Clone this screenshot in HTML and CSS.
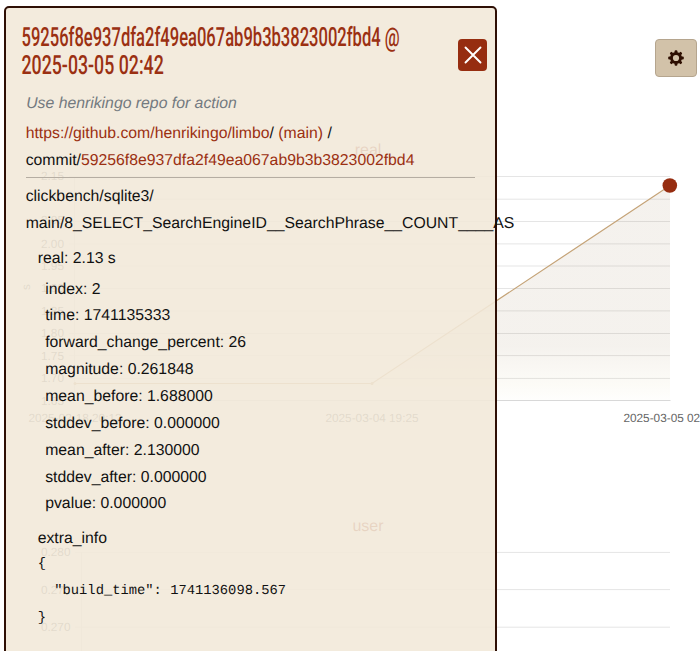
FILE: index.html
```html
<!DOCTYPE html>
<html lang="en">
<head>
<meta charset="utf-8">
<title>Benchmark results</title>
<link rel="stylesheet" href="styles.css">
</head>
<body>
<header class="toolbar">
  <button class="settings" aria-label="Settings">
    <svg width="16" height="16" viewBox="0 0 16 16"><g fill="#2e0f02"><circle cx="8" cy="8" r="6"/><g><rect x="6.6" y="0.2" width="2.8" height="15.6" rx="1"/><rect x="0.2" y="6.6" width="15.6" height="2.8" rx="1"/></g><g transform="rotate(45 8 8)"><rect x="6.6" y="0.2" width="2.8" height="15.6" rx="1"/><rect x="0.2" y="6.6" width="15.6" height="2.8" rx="1"/></g></g><circle cx="8" cy="8" r="3.1" fill="#d2c2a9"/></svg>
  </button>
</header>
<main class="charts">
  <svg class="chart" width="700" height="551" viewBox="0 100 700 551">
    <defs>
      <linearGradient id="area" x1="0" y1="185" x2="0" y2="400" gradientUnits="userSpaceOnUse">
        <stop offset="0" stop-color="#8b6b3d" stop-opacity=".09"/>
        <stop offset=".75" stop-color="#8b6b3d" stop-opacity=".09"/>
        <stop offset=".93" stop-color="#d8c68c" stop-opacity=".07"/>
        <stop offset="1" stop-color="#d8c68c" stop-opacity=".02"/>
      </linearGradient>
    </defs>
    <g class="grid">
      <path d="M69 176.5H670M69 199.2H670M69 221.5H670M69 243.9H670M69 266H670M69 288.5H670M69 310.9H670M69 333.5H670M69 355.6H670M69 378.4H670M74.500 176V400"/>
      <path d="M75 552.4H670M75 589.6H670M75 627.2H670M81.500 552V651"/>
    </g>
    <path class="axis" d="M69 400.500H670.500"/>
    <path d="M75 383.500H372L670 185.500V400H75Z" fill="url(#area)"/>
    <path class="series" d="M75 383.500H372L670 185.500"/>
    <circle class="dot" cx="75" cy="383.500" r="1.500"/>
    <circle class="dot" cx="372" cy="383.500" r="1.500"/>
    <circle class="mark" cx="669.800" cy="185.500" r="7.300"/>
    <g class="ticks end">
      <text x="64" y="180">2.15</text><text x="64" y="223.500">2.05</text><text x="64" y="247.500">2.00</text><text x="64" y="270">1.95</text><text x="64" y="292">1.90</text><text x="64" y="314.500">1.85</text><text x="64" y="337">1.80</text><text x="64" y="359.500">1.75</text><text x="64" y="382">1.70</text><text x="64" y="404.500">1.65</text>
      <text x="70.500" y="556">0.280</text><text x="70.500" y="593.500">0.275</text><text x="70.500" y="630.500">0.270</text>
    </g>
    <g class="ticks mid">
      <text x="75" y="422">2025-02-18 20:12</text><text x="372" y="422">2025-03-04 19:25</text><text x="670" y="422">2025-03-05 02:42</text>
      <text transform="translate(30 287) rotate(-90)">s</text>
    </g>
    <g class="titles"><text x="368" y="155">real</text><text x="368" y="531">user</text></g>
  </svg>
</main>
<aside class="panel">
  <div class="head">
    <h1><span>59256f8e937dfa2f49ea067ab9b3b3823002fbd4 @</span><span class="date">2025-03-05 02:42</span></h1>
    <button class="close" aria-label="Close"><svg width="18" height="18" viewBox="0 0 18 18"><path d="M1.500 1.500L16.500 16.500M16.500 1.500L1.500 16.500" stroke="#fff" stroke-width="1.900" stroke-linecap="round"/></svg></button>
  </div>
  <div class="content">
    <p class="message">Use henrikingo repo for action</p>
    <p class="commit"><a>https://github.com/henrikingo/limbo</a>/ <a>(main)</a> /<br>commit/<a>59256f8e937dfa2f49ea067ab9b3b3823002fbd4</a></p>
    <p class="test">clickbench/sqlite3/<br>main/8_SELECT_SearchEngineID__SearchPhrase__COUNT____AS</p>
    <p class="metric">real: 2.13 s</p>
    <ul>
      <li>index: 2</li><li>time: 1741135333</li><li>forward_change_percent: 26</li><li>magnitude: 0.261848</li><li>mean_before: 1.688000</li><li>stddev_before: 0.000000</li><li>mean_after: 2.130000</li><li>stddev_after: 0.000000</li><li>pvalue: 0.000000</li>
    </ul>
    <p class="extra">extra_info</p>
<pre>{
  "build_time": 1741136098.567
}</pre>
  </div>
</aside>
</body>
</html>
```
FILE: styles.css
```css
* { box-sizing: border-box; }
body {
  margin: 0;
  height: 651px;
  overflow: hidden;
  position: relative;
  background: #fff;
  color: #111;
  font: 15.79px/26.85px "Liberation Sans", Arial, sans-serif;
  text-rendering: geometricPrecision;
}
p, ul, pre, h1 { margin: 0; padding: 0; }
.toolbar { height: 100px; padding: 39px 3.5px 0 0; display: flex; justify-content: flex-end; align-items: flex-start; }
.settings {
  width: 42px; height: 38px; padding: 0;
  display: flex; align-items: center; justify-content: center;
  border: 1px solid #b5a58e; border-radius: 4px; background: #d2c2a9;
}
.chart { display: block; }
.grid path { stroke: #e5e5e5; fill: none; }
.axis { stroke: #d8d8d8; }
.series { stroke: #c5a377; stroke-width: 1.2; fill: none; }
.dot { fill: #c5a377; }
.mark { fill: #962d10; }
.ticks { font-size: 11.8px; fill: #666; }
.end { text-anchor: end; }
.mid, .titles { text-anchor: middle; }
.titles { font-size: 16px; fill: #962d10; }
.panel {
  position: absolute; left: 4px; top: 6px;
  width: 493px; height: 660px;
  padding: 15px 8px 0 16px;
  border: 2px solid #2e0f05; border-radius: 5px;
  background: rgba(242, 232, 217, .89);
}
.head { display: flex; justify-content: space-between; height: 66px; }
h1 { width: 400px; padding-top: 1px; color: #9b3012; font: 500 26.5px/27.5px Roboto, sans-serif; }
h1 span { display: block; width: max-content; white-space: nowrap; transform: translateX(-.5px) scaleX(.625); transform-origin: 0 50%; }
h1 .date { transform: translateX(-.5px) scaleX(.67); }
.close {
  width: 29px; height: 32px; margin-top: 16px; padding: 0;
  display: flex; align-items: center; justify-content: center;
  background: #962d10; border: 0; border-radius: 4px;
}
.content { padding-left: 3.7px; width: 453px; }
.message { padding: 2px 0 0 .5px; height: 32.4px; color: #737a80; font-style: italic; }
.commit { height: 57px; border-bottom: 1px solid #b5ada2; width: 449px; }
.commit a { color: #9b3012; }
.test { padding-top: 5.7px; white-space: nowrap; }
.metric { padding: 8px 0 0 12px; }
ul { list-style: none; padding: 4px 0 0 19.5px; }
.extra { padding: 7.8px 0 0 12px; }
pre { padding-left: 12px; margin-top: -.9px; font: 13.8px/26.85px "Liberation Mono", monospace; }
```
